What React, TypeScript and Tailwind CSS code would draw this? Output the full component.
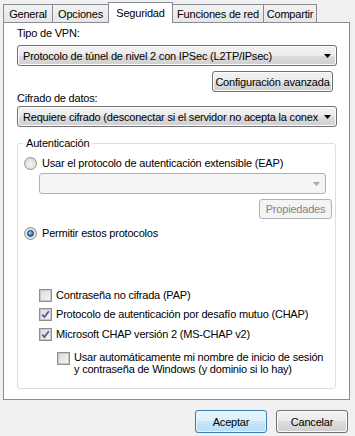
import React from 'react';

const btnFace =
  'bg-[linear-gradient(to_bottom,#f2f2f2_0%,#ebebeb_50%,#dddddd_50%,#cfcfcf_100%)] border border-[#707070] rounded-[3px] shadow-[inset_0_0_0_1px_#fcfcfc]';

const Arrow = ({ color = '#000' }: { color?: string }) => (
  <svg width="7" height="4" viewBox="0 0 7 4" className="shrink-0">
    <path d="M0 0h7L3.5 4z" fill={color} />
  </svg>
);

const Radio = ({ checked }: { checked?: boolean }) => (
  <span className="relative flex h-[13px] w-[13px] shrink-0 items-center justify-center rounded-full border border-[#8e8f8f] bg-[radial-gradient(circle_at_50%_60%,#f4f4f4_0%,#dcdcdc_70%,#c8c8c8_100%)]">
    {checked && (
      <span className="h-[7px] w-[7px] rounded-full border border-[#1a3a63] bg-[radial-gradient(circle_at_40%_35%,#bfe6ff_0%,#3b8ad8_45%,#0c4c93_100%)]" />
    )}
  </span>
);

const Check = ({ checked }: { checked?: boolean }) => (
  <span className="flex h-[13px] w-[13px] shrink-0 items-center justify-center border border-[#8e8f8f] bg-white">
    <span className="flex h-[11px] w-[11px] items-center justify-center border border-[#c6c6c6] bg-[linear-gradient(135deg,#dcdcdc_0%,#f4f4f4_100%)]">
      {checked && (
        <svg width="9" height="9" viewBox="0 0 9 9">
          <path d="M1.2 4.6 L3.4 7 L7.8 1.2" fill="none" stroke="#4a5f97" strokeWidth="1.8" />
        </svg>
      )}
    </span>
  </span>
);

const tabs = [
  { label: 'General', w: 'w-[50px]' },
  { label: 'Opciones', w: 'w-[57px]' },
  { label: 'Seguridad', w: 'w-[65px]', active: true },
  { label: 'Funciones de red', w: 'w-[92px]' },
  { label: 'Compartir', w: 'w-[54px]' },
];

export default function App() {
  return (
    <div className="h-[436px] w-[355px] overflow-hidden bg-[#f0f0f0] font-['Liberation_Sans',Arial,sans-serif] text-[11px] leading-[14px] tracking-[-0.2px] text-black">
      {/* Tabs */}
      <div className="flex h-[22px] items-end pl-[3px]">
        {tabs.map((t, i) =>
          t.active ? (
            <div
              key={t.label}
              className={`relative z-10 -mb-px -ml-px flex h-[21px] ${t.w} items-start justify-center border border-b-0 border-[#898c95] bg-white pt-[3px]`}
            >
              {t.label}
            </div>
          ) : (
            <div
              key={t.label}
              className={`flex h-[18px] ${t.w} ${i > 0 ? '-ml-px' : ''} items-center justify-center border border-b-0 border-[#898c95] bg-[linear-gradient(to_bottom,#f2f2f2,#e6e6e6)] pt-px`}
            >
              {t.label}
            </div>
          )
        )}
      </div>

      {/* Panel */}
      <div className="ml-[3px] flex h-[378px] w-[347px] flex-col border border-[#898c95] bg-white px-[13px] pt-[3px]">
        <div>Tipo de VPN:</div>
        <div className={`mt-[5px] flex h-[21px] w-[320px] items-center justify-between pl-[5px] pr-[5px] ${btnFace}`}>
          <span className="whitespace-nowrap">Protocolo de túnel de nivel 2 con IPSec (L2TP/IPsec)</span>
          <Arrow />
        </div>
        <div className="mt-[5px] flex justify-end pr-[3px]">
          <div className={`flex h-[21px] w-[121px] items-center justify-center ${btnFace}`}>Configuración avanzada</div>
        </div>
        <div className="-mt-px">Cifrado de datos:</div>
        <div className={`mt-px flex h-[21px] w-[320px] items-center justify-between pl-[5px] pr-[5px] ${btnFace}`}>
          <span className="overflow-hidden whitespace-nowrap">Requiere cifrado (desconectar si el servidor no acepta la conex</span>
          <span className="flex h-full shrink-0 items-center pl-[4px]">
            <Arrow />
          </span>
        </div>

        <fieldset className="mt-[9px] h-[253px] w-[319px] rounded-[3px] border border-[#d5dfe5] pl-[6px]">
          <legend className="ml-[-1px] px-[3px]">Autenticación</legend>
          <div className="mt-[6px] flex items-center gap-[5px]">
            <Radio />
            <span>Usar el protocolo de autenticación extensible (EAP)</span>
          </div>
          <div className="ml-[15px] mt-[3px] flex h-[21px] w-[287px] items-center justify-end rounded-[3px] border border-[#adb2b5] bg-[#f4f4f4] pr-[5px]">
            <Arrow color="#a6a6a6" />
          </div>
          <div className="mt-[5px] flex justify-end pr-[3px]">
            <div className="flex h-[20px] w-[73px] items-center justify-center rounded-[3px] border border-[#adb2b5] bg-[#f4f4f4] text-[#838383]">
              Propiedades
            </div>
          </div>
          <div className="mt-[7px] flex items-center gap-[5px]">
            <Radio checked />
            <span>Permitir estos protocolos</span>
          </div>

          <div className="ml-[15px] mt-[48px] flex flex-col">
            <div className="flex items-center gap-[4px]">
              <Check />
              <span>Contraseña no cifrada (PAP)</span>
            </div>
            <div className="mt-[5px] flex items-center gap-[4px]">
              <Check checked />
              <span>Protocolo de autenticación por desafío mutuo (CHAP)</span>
            </div>
            <div className="mt-[6px] flex items-center gap-[4px]">
              <Check checked />
              <span>Microsoft CHAP versión 2 (MS-CHAP v2)</span>
            </div>
            <div className="ml-[18px] mt-[10px] flex items-start gap-[4px] leading-[12px]">
              <span className="mt-px">
                <Check />
              </span>
              <span>
                Usar automáticamente mi nombre de inicio de sesión
                <br />y contraseña de Windows (y dominio si lo hay)
              </span>
            </div>
          </div>
        </fieldset>
      </div>

      {/* Buttons */}
      <div className="mt-[10px] flex justify-end gap-[9px] pr-[7px]">
        <div className="flex h-[23px] w-[72px] items-center justify-center rounded-[3px] border border-[#3c7fb1] bg-[linear-gradient(to_bottom,#e8f5fc_0%,#dbf0fb_50%,#c6e7f8_50%,#b7dff5_100%)] shadow-[inset_0_0_0_1px_#e4f4fc]">
          Aceptar
        </div>
        <div className={`flex h-[23px] w-[72px] items-center justify-center ${btnFace}`}>Cancelar</div>
      </div>
    </div>
  );
}
